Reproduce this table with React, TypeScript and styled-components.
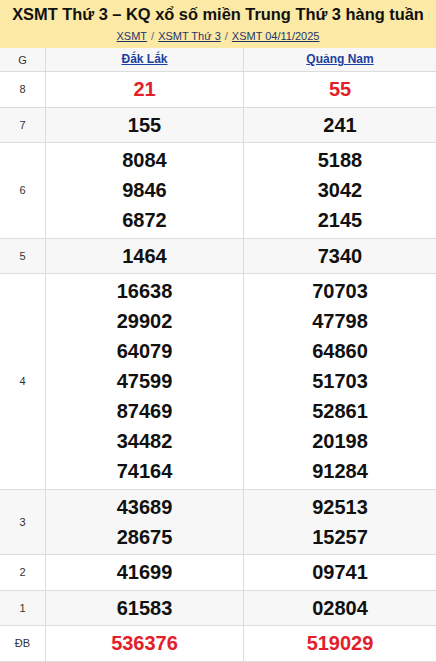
import React from "react";
import styled, { createGlobalStyle } from "styled-components";

type Prize = {
  label: string;
  left: string[];
  right: string[];
  red?: boolean;
};

const prizes: Prize[] = [
  { label: "8", left: ["21"], right: ["55"], red: true },
  { label: "7", left: ["155"], right: ["241"] },
  { label: "6", left: ["8084", "9846", "6872"], right: ["5188", "3042", "2145"] },
  { label: "5", left: ["1464"], right: ["7340"] },
  {
    label: "4",
    left: ["16638", "29902", "64079", "47599", "87469", "34482", "74164"],
    right: ["70703", "47798", "64860", "51703", "52861", "20198", "91284"],
  },
  { label: "3", left: ["43689", "28675"], right: ["92513", "15257"] },
  { label: "2", left: ["41699"], right: ["09741"] },
  { label: "1", left: ["61583"], right: ["02804"] },
  { label: "ĐB", left: ["536376"], right: ["519029"], red: true },
];

const GlobalStyle = createGlobalStyle`
  body {
    margin: 0;
    background: #ffffff;
    font-family: "Liberation Sans", Arial, sans-serif;
  }
`;

const Page = styled.div`
  width: 436px;
`;

const Header = styled.header`
  padding: 4px 0 6px;
  background: #fce9a6;
  text-align: center;
`;

const Title = styled.h1`
  margin: 0;
  color: #111111;
  font-size: 16.4px;
  font-weight: 700;
  line-height: 20px;
`;

const Crumbs = styled.nav`
  display: flex;
  justify-content: center;
  gap: 4px;
  margin-top: 6px;
  font-size: 11px;
  line-height: 12px;
  color: #666666;
`;

const Crumb = styled.a`
  color: #1f356b;
  text-decoration: underline;
`;

const Row = styled.div<{ $striped?: boolean }>`
  display: grid;
  grid-template-columns: 45px 198px 1fr;
  border-bottom: 1px solid #dcdcdc;
  background: ${(p) => (p.$striped ? "#f7f7f7" : "#ffffff")};
`;

const Label = styled.div`
  display: flex;
  align-items: center;
  justify-content: center;
  color: #333333;
  font-size: 11px;
`;

const Cell = styled.div`
  display: flex;
  flex-direction: column;
  align-items: center;
  justify-content: center;
  border-left: 1px solid #dcdcdc;
`;

const HeadCell = styled(Cell)`
  padding: 3px 0;
  line-height: 17px;
`;

const Province = styled.a`
  color: #1c3fa0;
  font-size: 12px;
  font-weight: 700;
  text-decoration: underline;
`;

const Numbers = styled(Cell)`
  padding: 2px 0 2.5px;
`;

const Num = styled.div<{ $red?: boolean }>`
  color: ${(p) => (p.$red ? "#e3202a" : "#111111")};
  font-size: 20px;
  font-weight: 700;
  line-height: 30px;
`;

export default function App() {
  return (
    <Page>
      <GlobalStyle />
      <Header>
        <Title>XSMT Thứ 3 – KQ xổ số miền Trung Thứ 3 hàng tuần</Title>
        <Crumbs>
          <Crumb href="#">XSMT</Crumb>
          <span>/</span>
          <Crumb href="#">XSMT Thứ 3</Crumb>
          <span>/</span>
          <Crumb href="#">XSMT 04/11/2025</Crumb>
        </Crumbs>
      </Header>

      <Row $striped>
        <Label>G</Label>
        <HeadCell>
          <Province href="#">Đắk Lắk</Province>
        </HeadCell>
        <HeadCell>
          <Province href="#">Quảng Nam</Province>
        </HeadCell>
      </Row>

      {prizes.map((prize, i) => (
        <Row key={prize.label} $striped={i % 2 === 1}>
          <Label>{prize.label}</Label>
          <Numbers>
            {prize.left.map((n) => (
              <Num key={n} $red={prize.red}>
                {n}
              </Num>
            ))}
          </Numbers>
          <Numbers>
            {prize.right.map((n) => (
              <Num key={n} $red={prize.red}>
                {n}
              </Num>
            ))}
          </Numbers>
        </Row>
      ))}
    </Page>
  );
}
